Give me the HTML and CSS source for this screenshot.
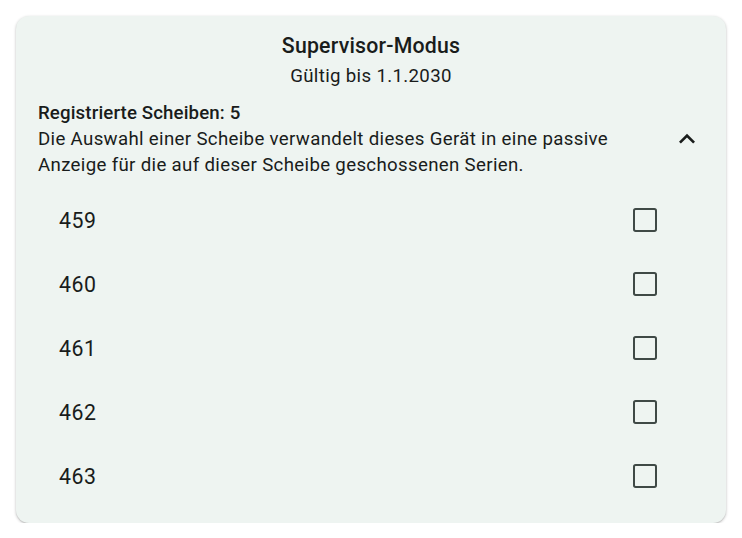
FILE: index.html
```html
<!DOCTYPE html>
<html lang="de">
<head>
    <meta charset="UTF-8">
    <meta name="viewport" content="width=device-width, initial-scale=1.0">
    <title>Supervisor-Modus</title>
    <link rel="stylesheet" href="styles.css">
</head>
<body>
    <div class="card">
        <div class="card-header">
            <h2>Supervisor-Modus</h2>
            <p>Gültig bis 1.1.2030</p>
        </div>

        <div class="targets">
            <div class="targets-head">
                <div class="targets-text">
                    <h3>Registrierte Scheiben: 5</h3>
                    <p>Die Auswahl einer Scheibe verwandelt dieses Gerät in eine passive Anzeige für die auf dieser Scheibe geschossenen Serien.</p>
                </div>
                <svg class="expand-icon" viewBox="0 0 24 24" width="32" height="32">
                    <path d="M12 8l-6 6 1.41 1.41L12 10.83l4.59 4.58L18 14z"/>
                </svg>
            </div>

            <ul class="target-list">
                <li class="target-item"><span>459</span><span class="checkbox"></span></li>
                <li class="target-item"><span>460</span><span class="checkbox"></span></li>
                <li class="target-item"><span>461</span><span class="checkbox"></span></li>
                <li class="target-item"><span>462</span><span class="checkbox"></span></li>
                <li class="target-item"><span>463</span><span class="checkbox"></span></li>
            </ul>
        </div>
    </div>
</body>
</html>
```

FILE: styles.css
```css
body {
    margin: 0;
    background: #ffffff;
    font-family: Roboto, 'Noto Sans', Arial, sans-serif;
    color: #191c1b;
}
.card {
    width: 710px;
    margin: 16px 16px 0 16px;
    background: #eef4f1;
    border-radius: 13px;
    box-shadow: 0 1px 3px rgba(0,0,0,0.25), 0 1px 1px rgba(0,0,0,0.08);
    padding-bottom: 15px;
}
.card-header {
    text-align: center;
    padding-top: 15px;
}
.card-header h2 {
    margin: 0;
    font-size: 21.3px;
    font-weight: 500;
    line-height: 29px;
    letter-spacing: 0.2px;
}
.card-header p {
    margin: 0;
    font-size: 18.67px;
    line-height: 32px;
    letter-spacing: 0.33px;
}
.targets {
    padding-top: 8px;
}
.targets-head {
    display: flex;
    align-items: flex-start;
    padding: 0 23px 0 22px;
}
.targets-text {
    flex: 1;
}
.targets-text h3 {
    margin: 0;
    font-size: 18.67px;
    font-weight: 500;
    line-height: 26px;
    letter-spacing: 0.13px;
}
.targets-text p {
    margin: 0;
    font-size: 18.67px;
    line-height: 26px;
    letter-spacing: 0.33px;
    max-width: 600px;
}
.expand-icon {
    fill: #191c1b;
    margin-top: 23px;
    flex-shrink: 0;
}
.target-list {
    list-style: none;
    margin: 10px 0 0 0;
    padding: 0;
}
.target-item {
    height: 64px;
    display: flex;
    align-items: center;
    justify-content: space-between;
    padding: 0 69px 0 43px;
    font-size: 21.3px;
    letter-spacing: 0.5px;
}
.checkbox {
    width: 24px;
    height: 24px;
    box-sizing: border-box;
    border: 2.8px solid #3f4946;
    border-radius: 2.67px;
}
```
